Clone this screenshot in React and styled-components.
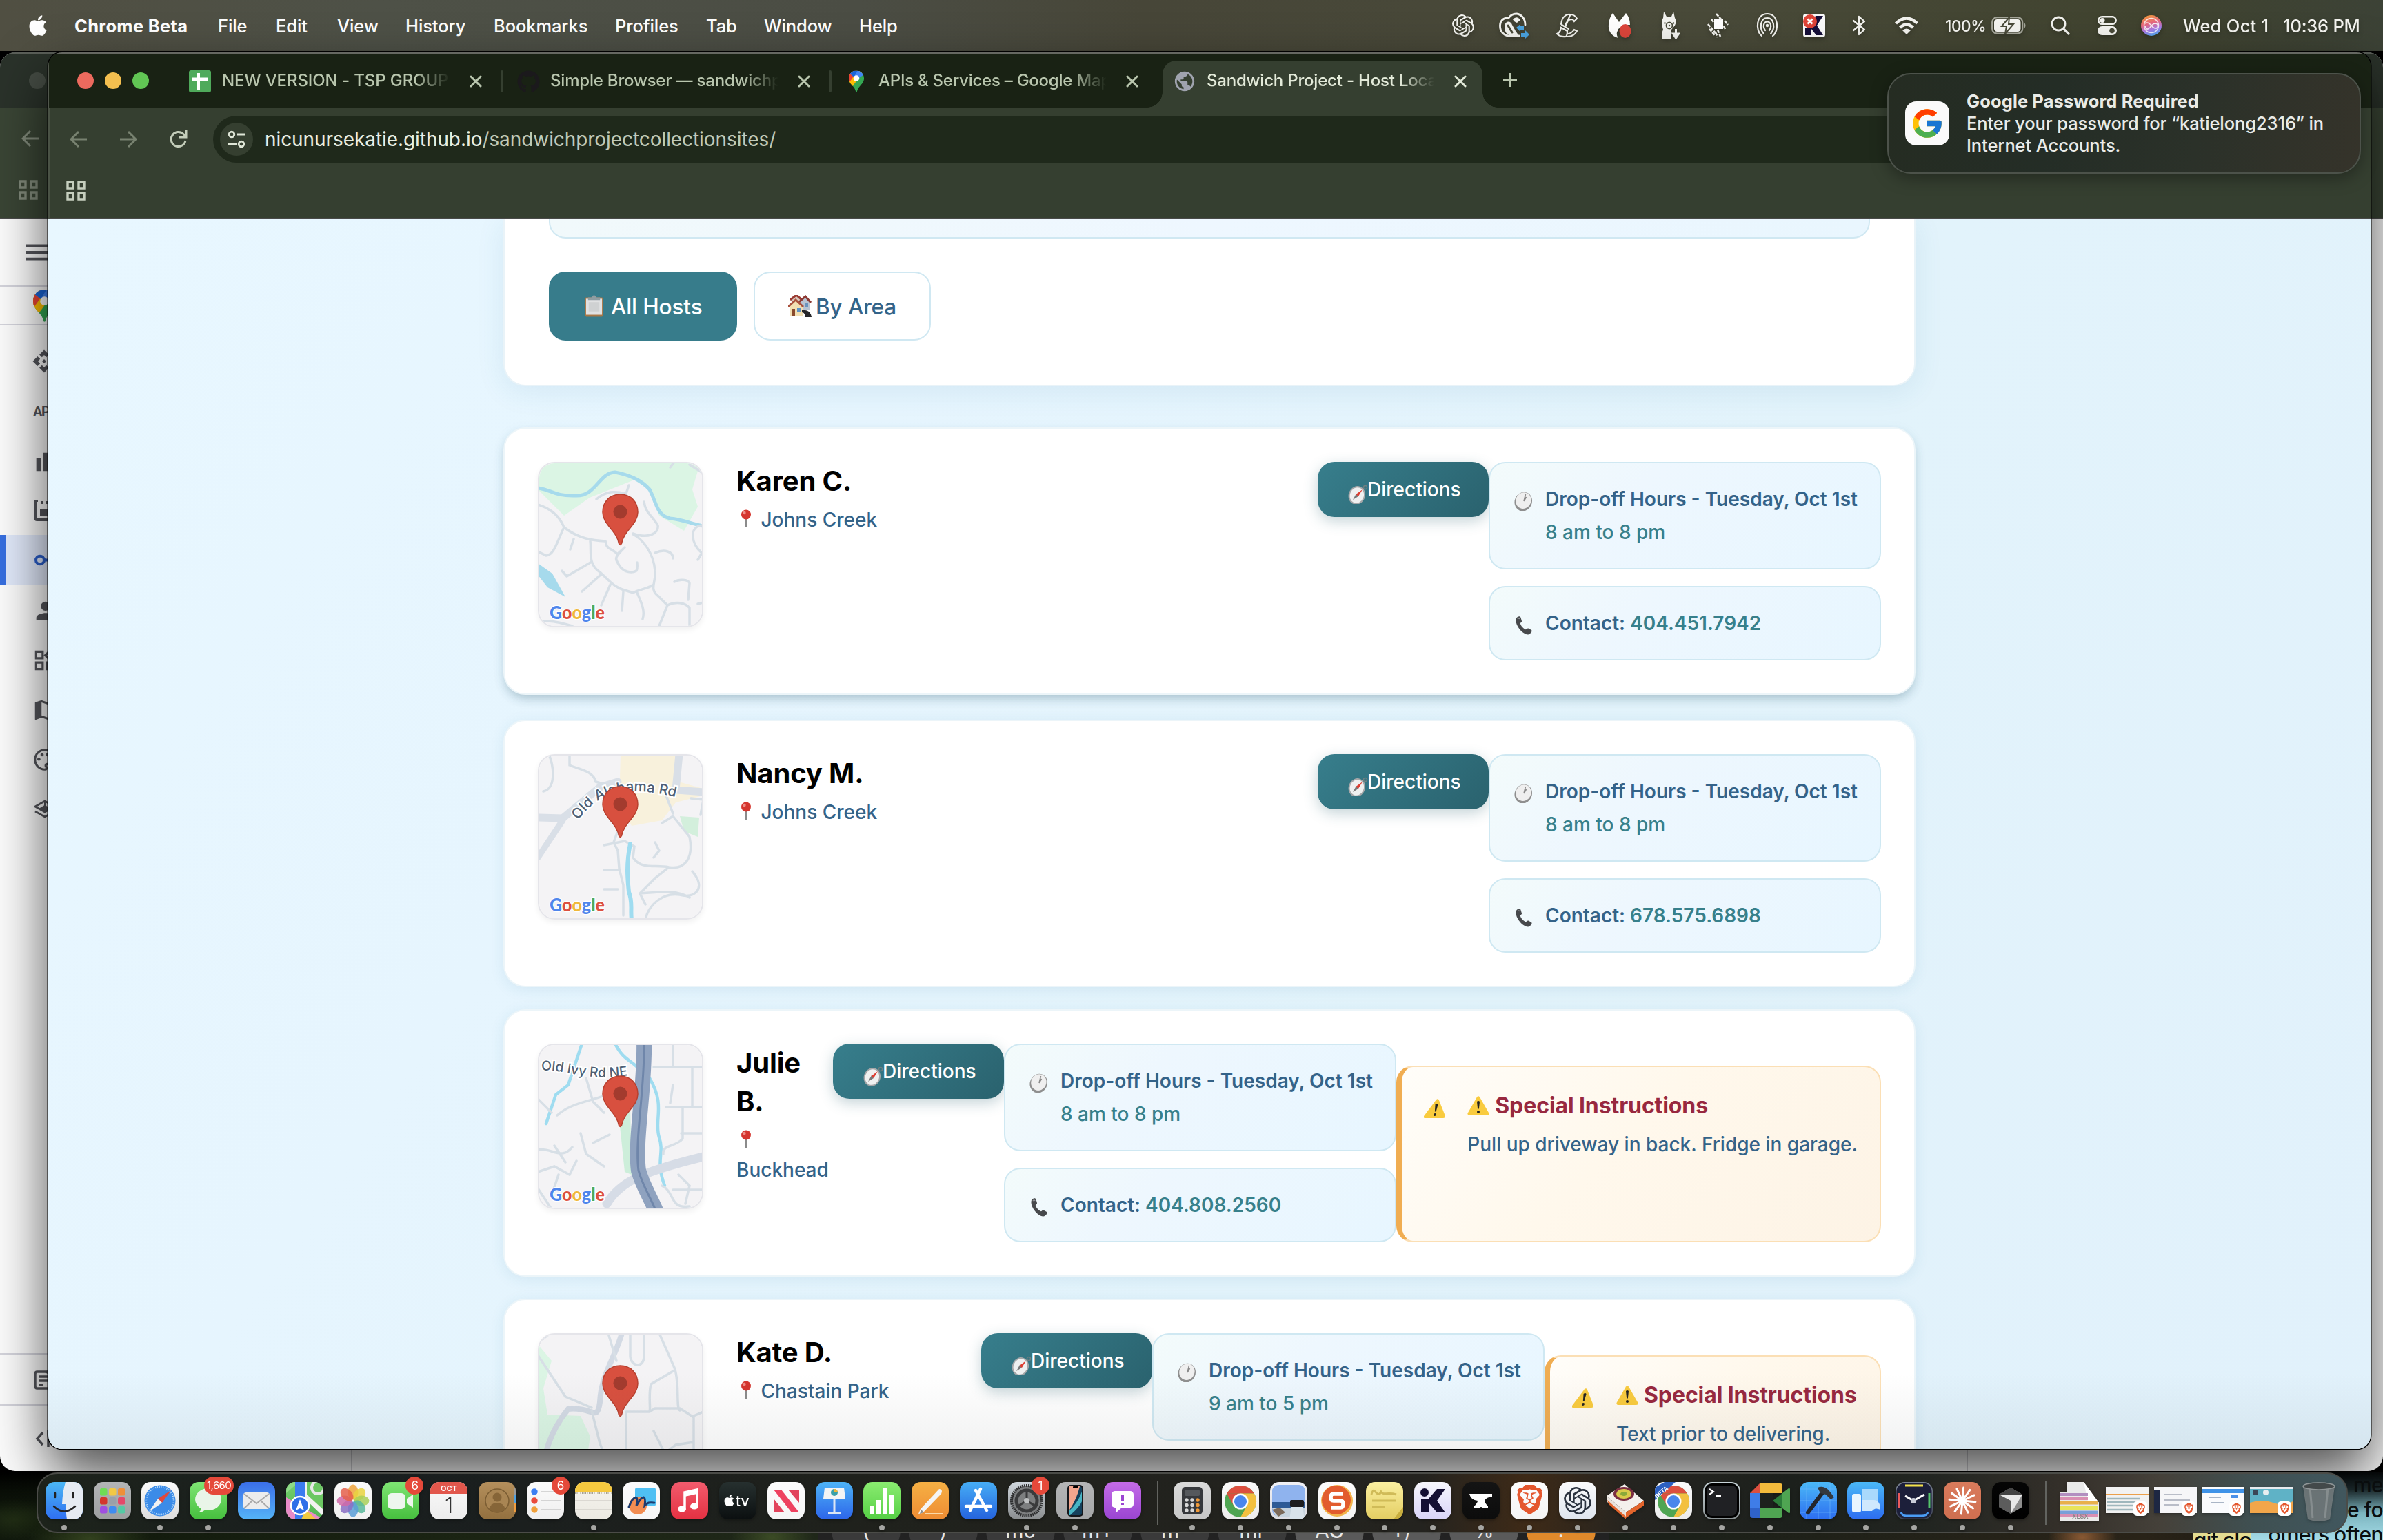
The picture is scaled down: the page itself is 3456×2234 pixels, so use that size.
import React from "react";
import styled, { createGlobalStyle, css } from "styled-components";
import { FaApple, FaGithub } from "react-icons/fa";
import { FcGoogle } from "react-icons/fc";
import {
  MdApi, MdBarChart, MdPerson, MdOutlineWidgets, MdMap,
  MdOutlinePalette, MdPublic, MdMenu,
} from "react-icons/md";
import { SiOpenai, SiBrave } from "react-icons/si";

const Global = createGlobalStyle`
  * { box-sizing: border-box; }
  html, body { margin: 0; padding: 0; background: #000; overflow: hidden; }
  body { font-family: Inter, "Liberation Sans", sans-serif; }
  svg { display: block; flex: none; }
`;

/* ---------- desktop ---------- */
const Desktop = styled.div`
  position: relative;
  width: 3456px;
  height: 2234px;
  overflow: hidden;
  background: #000;
`;

const Wallpaper = styled.div`
  position: absolute;
  left: 0;
  top: 2134px;
  width: 3456px;
  height: 100px;
  background:
    linear-gradient(#000 0%, rgba(0, 0, 0, 0.4) 30%, rgba(0, 0, 0, 0) 60%),
    radial-gradient(60px 30px at 1120px 96px, #3c4c26, transparent),
    radial-gradient(90px 34px at 130px 98px, #33421f, transparent),
    radial-gradient(60px 30px at 20px 70px, #202c14, transparent),
    radial-gradient(50px 30px at 3020px 96px, #8a5a34, transparent),
    linear-gradient(90deg, #10180c, #1c2514 20%, #20281a 34%, #1c211a 70%, #2a2419 90%, #12100c);
`;

const CalcStrip = styled.div`
  position: absolute;
  left: 1186px;
  top: 2200px;
  width: 1148px;
  height: 34px;
  display: flex;
  gap: 12px;
  padding: 0 0 0 20px;
  background: #232323;
  overflow: hidden;
`;
const CalcKey = styled.div`
  width: 100px;
  flex: none;
  height: 60px;
  border-radius: 0 0 40px 40px;
  text-align: center;
  font-size: 30px;
  line-height: 40px;
  color: #e8e8e8;
  background: ${(p) => p.$bg};
`;

const Sticky = styled.div`
  position: absolute;
  left: ${(p) => p.$x}px;
  top: ${(p) => p.$y}px;
  width: ${(p) => p.$w}px;
  height: ${(p) => p.$h}px;
  overflow: hidden;
  background: ${(p) => p.$bg};
  color: #0b0f10;
  font-size: 30px;
  font-weight: 500;
  letter-spacing: -0.6px;
  line-height: 36px;
  text-align: right;
  white-space: pre;
`;

/* ---------- menu bar ---------- */
const MenuBar = styled.header`
  height: 74px;
  display: flex;
  align-items: center;
  color: #fff;
  font-size: 25.5px;
  background: linear-gradient(90deg, #504f42 0%, #4e5147 16%, #4b4d44 36%, #474638 48%, #494a39 72%, #40432f 90%, #3c4236 100%);
`;
const AppleCell = styled.div`
  width: 108px;
  padding-left: 38px;
`;
const MenuItem = styled.div`
  width: ${(p) => p.$w}px;
  white-space: nowrap;
  font-weight: ${(p) => (p.$bold ? 700 : 500)};
  letter-spacing: ${(p) => (p.$bold ? "0.3px" : "-0.1px")};
`;
const Status = styled.div`
  margin-left: auto;
  display: flex;
  align-items: center;
  filter: drop-shadow(0 3px 3px rgba(0, 0, 0, 0.25));
`;
const StatusCell = styled.div`
  width: ${(p) => p.$w}px;
  padding-left: ${(p) => p.$pl || 0}px;
  display: flex;
  justify-content: ${(p) => (p.$start ? "flex-start" : "center")};
  white-space: nowrap;
  font-weight: 500;
  font-size: ${(p) => p.$fs || 25.5}px;
  letter-spacing: ${(p) => p.$ls || 0}px;
  color: #f4f4f0;
`;

/* ---------- windows ---------- */
const BackWindow = styled.div`
  position: absolute;
  left: 0;
  top: 76px;
  width: 3456px;
  height: 2058px;
  border-radius: 22px;
  overflow: hidden;
  background: #fcfcfc;
  display: flex;
  flex-direction: column;
`;
const BackTabs = styled.div`
  height: 80px;
  flex: none;
  background: #2a322a;
  border-top: 2px solid #5c605a;
  padding: 27px 0 0 42px;
`;
const GreyDot = styled.div`
  width: 24px;
  height: 24px;
  border-radius: 50%;
  background: #454c44;
`;
const BackTools = styled.div`
  height: 162px;
  flex: none;
  background: #3a4535;
  border-bottom: 2px solid #4c4c4c;
  padding: 32px 0 0 31px;
  display: flex;
  flex-direction: column;
  gap: 47px;
  color: #80897a;
  svg + svg { margin-left: -5px; }
`;
const BackBody = styled.div`
  flex: 1;
  display: flex;
`;
const Rail = styled.nav`
  width: 511px;
  flex: none;
  border-right: 2px solid #d0d0d4;
  display: flex;
  flex-direction: column;
  color: #55565c;
`;
const RailRow = styled.div`
  height: ${(p) => p.$h}px;
  flex: none;
  display: flex;
  align-items: center;
  padding-left: ${(p) => p.$pl || 46}px;
  border-bottom: ${(p) => (p.$line ? "2px solid #d4d4dc" : "0")};
  margin-top: ${(p) => p.$mt || 0}px;
  ${(p) => p.$active && css`
    background: #e2eafb;
    color: #2b5fcb;
    box-shadow: inset 8px 0 0 #376fe0;
  `}
`;
const ApiText = styled.span`
  font: 700 20px Roboto, sans-serif;
  letter-spacing: -1.5px;
  padding-left: 2px;
`;
const BackPane = styled.div`
  width: 2343px;
  border-right: 2px solid #d0d0d4;
`;

const FrontWindow = styled.div`
  position: absolute;
  left: 70px;
  top: 76px;
  width: 3368px;
  height: 2026px;
  border-radius: 20px;
  box-shadow: 0 0 0 1.5px #000, 0 36px 80px rgba(0, 0, 0, 0.7);
`;
const WindowClip = styled.div`
  height: 100%;
  border-radius: 20px;
  overflow: hidden;
  display: flex;
  flex-direction: column;
`;
const TabStrip = styled.div`
  height: 80px;
  flex: none;
  display: flex;
  background: #192214;
  border-top: 2px solid #666862;
  border-left: 1px solid #50564c;
  padding-top: 10px;
`;
const Lights = styled.div`
  display: flex;
  gap: 16px;
  width: 188px;
  padding: 17px 0 0 41px;
`;
const Light = styled.i`
  width: 24px;
  height: 24px;
  border-radius: 50%;
  background: ${(p) => p.$c};
`;
const TabItem = styled.div`
  width: 476px;
  height: 68px;
  padding: 0 0 8px 15px;
  display: flex;
  flex: none;
  align-items: center;
  position: relative;
  color: ${(p) => (p.$active ? "#e3ead9" : "#b9c6ae")};
  ${(p) => p.$active && css`
    width: 464px;
    margin-left: -1px;
    padding-left: 16px;
    background: #353f30;
    border-radius: 20px 20px 0 0;
    &::before, &::after {
      content: "";
      position: absolute;
      bottom: 0;
      width: 22px;
      height: 22px;
    }
    &::before { left: -22px; background: radial-gradient(circle at 0 0, transparent 21.5px, #353f30 22px); }
    &::after { right: -22px; background: radial-gradient(circle at 100% 0, transparent 21.5px, #353f30 22px); }
  `}
`;
const TabIcon = styled.div`
  width: 32px;
  flex: none;
  display: flex;
  justify-content: center;
`;
const TabLabel = styled.div`
  width: 334px;
  flex: none;
  margin-left: 16px;
  margin-top: -2px;
  overflow: hidden;
  white-space: nowrap;
  font-size: 24px;
  font-weight: 500;
  letter-spacing: ${(p) => p.$ls || 0}px;
  line-height: 34px;
  mask-image: linear-gradient(90deg, #000 84%, transparent 99%);
`;
const TabSep = styled.div`
  width: 4px;
  height: 32px;
  border-radius: 2px;
  background: #353f30;
  margin-left: 27px;
`;
const CloseX = styled.div`
  margin-left: 25px;
`;
const NewTab = styled.div`
  padding: 18px 0 0 30px;
`;

const Toolbar = styled.div`
  height: 90px;
  flex: none;
  display: flex;
  align-items: center;
  background: #353f30;
  border-left: 2px solid #4a5245;
  padding: 2px 60px 0 29px;
  color: #788270;
`;
const NavCell = styled.div`
  width: 72px;
  display: flex;
`;
const UrlPill = styled.div`
  flex: 1;
  height: 68px;
  border-radius: 34px;
  background: #1f291b;
  display: flex;
  align-items: center;
  padding-left: 10px;
  margin-left: -8px;
`;
const SiteChip = styled.div`
  width: 48px;
  height: 48px;
  border-radius: 50%;
  background: #353f30;
  display: flex;
  align-items: center;
  justify-content: center;
`;
const Url = styled.div`
  margin-left: 17px;
  font-size: 28px;
  letter-spacing: -0.07px;
  color: #c0c9b8;
  span { color: #e8eee2; }
`;
const Bookmarks = styled.div`
  height: 72px;
  flex: none;
  background: #353f30;
  border-bottom: 2px solid #494a48;
  border-left: 2px solid #4a5245;
  padding: 16px 0 0 23px;
  color: #c6cfbe;
`;

/* ---------- page ---------- */
const Page = styled.main`
  flex: 1;
  min-height: 0;
  overflow: hidden;
  position: relative;
  display: flex;
  flex-direction: column;
  align-items: center;
  background: linear-gradient(125deg, #e8f7ff 0%, #e6f5fe 30%, #e2f3fb 60%, #e1f1fb 100%);
  &::after {
    content: "";
    position: absolute;
    left: 0; right: 0; bottom: 0;
    height: 110px;
    background: linear-gradient(rgba(60, 70, 70, 0), rgba(60, 70, 70, 0.07));
  }
`;
const HeaderCard = styled.section`
  width: 2048px;
  height: 242px;
  flex: none;
  padding: 0 64px;
  background: #fff;
  border: 2px solid #e9f3f8;
  border-top: 0;
  border-radius: 0 0 32px 32px;
  box-shadow: 0 8px 40px rgba(40, 120, 160, 0.1);
`;
const SearchBottom = styled.div`
  height: 28px;
  border: 2px solid #d0e8f2;
  border-top: 0;
  border-radius: 0 0 24px 24px;
  background: linear-gradient(90deg, #f1f9fb, #eef7ff 50%, #e9f6fe);
`;
const Filters = styled.div`
  display: flex;
  gap: 24px;
  margin-top: 48px;
`;
const FilterButton = styled.button`
  width: ${(p) => p.$w}px;
  height: 100px;
  padding: 0 0 0 ${(p) => p.$pl}px;
  display: flex;
  align-items: center;
  gap: ${(p) => p.$gap}px;
  font: 500 31.5px Inter, sans-serif;
  letter-spacing: -0.1px;
  border-radius: 24px;
  border: 2px solid ${(p) => (p.$on ? "#377c8b" : "#d0e8f2")};
  background: ${(p) => (p.$on ? "#377c8b" : "#fff")};
  color: ${(p) => (p.$on ? "#fff" : "#336388")};
  white-space: nowrap;
`;
const List = styled.section`
  display: flex;
  flex-direction: column;
  gap: 32px;
  padding-top: 64px;
  width: 2048px;
`;
const Card = styled.article`
  height: 388px;
  flex: none;
  display: flex;
  align-items: stretch;
  padding: 48px;
  background: #fff;
  border: 2px solid #ecf5f9;
  border-radius: 32px;
  box-shadow: ${(p) => (p.$hover
    ? "0 8px 16px -4px rgba(40,80,95,.3), 0 4px 20px rgba(40,120,160,.06)"
    : "0 4px 20px rgba(40,120,160,.1)")};
  transform: ${(p) => (p.$hover ? "translateY(-4px)" : "none")};
`;
const MapThumb = styled.div`
  width: 240px;
  height: 240px;
  flex: none;
  border: 2px solid #e5e5ea;
  border-radius: 24px;
  overflow: hidden;
  box-shadow: 0 4px 8px rgba(0, 0, 0, 0.06);
  margin-right: 48px;
`;
const Who = styled.div`
  flex: 1 1 0;
  min-width: 0;
  padding-right: 6px;
`;
const Name = styled.h3`
  margin: 0 0 7px;
  font-size: 40px;
  line-height: 56px;
  font-weight: 700;
  letter-spacing: -0.15px;
  color: #000;
`;
const Area = styled.div`
  font-size: 28px;
  line-height: 42.5px;
  font-weight: 500;
  color: #346389;
  svg { display: inline-block; vertical-align: -1px; margin: 0 5px 0 5px; }
`;
const Directions = styled.button`
  width: 248px;
  height: 80px;
  flex: none;
  border: 0;
  border-radius: 24px;
  display: flex;
  align-items: center;
  padding: 0 0 0 43px;
  font: 500 28px Inter, sans-serif;
  color: #fff;
  background: linear-gradient(135deg, #377e8c, #2a626e);
  box-shadow: 0 6px 20px rgba(42, 98, 110, 0.28);
  svg { margin: 14px -1px 0 0; }
`;
const Facts = styled.div`
  width: 569px;
  flex: none;
  display: flex;
  flex-direction: column;
  gap: 24px;
`;
const Fact = styled.div`
  display: flex;
  padding: 28px 32px 28px 34px;
  border: 2px solid #cfe8f2;
  border-radius: 24px;
  font-size: 28px;
  line-height: 48px;
  font-weight: 600;
  color: #346389;
  white-space: nowrap;
  background: linear-gradient(135deg, #f3fbfb 0%, #eef7fe 35%, #e7f6ff 100%);
  svg { margin: 13px 16px 0 0; }
`;
const Value = styled.span`
  color: #37808b;
  font-weight: ${(p) => (p.$strong ? 600 : 500)};
`;
const Special = styled.aside`
  width: ${(p) => p.$w}px;
  flex: none;
  margin-top: 32px;
  display: flex;
  padding: 32px 32px 0 32px;
  border: 2px solid #fbdfb5;
  border-left: 8px solid #f0ad52;
  border-radius: 24px;
  background: linear-gradient(135deg, #fffdf9 0%, #fff8ec 45%, #fdf3e5 100%);
  white-space: nowrap;
`;
const SpecialIcon = styled.div`
  width: 64px;
  padding-top: 14px;
`;
const SpecialTitle = styled.div`
  display: flex;
  align-items: center;
  gap: 8px;
  font-size: 32px;
  line-height: 48px;
  font-weight: 700;
  letter-spacing: -0.1px;
  color: #98283f;
`;
const SpecialText = styled.div`
  margin-top: 10px;
  font-size: 28px;
  line-height: 44px;
  font-weight: 500;
  color: #346389;
`;

/* ---------- notification ---------- */
const Notice = styled.div`
  position: absolute;
  left: 2737px;
  top: 106px;
  width: 687px;
  height: 146px;
  border: 2px solid #4c524a;
  border-radius: 34px;
  display: flex;
  align-items: center;
  padding-left: 24px;
  background: linear-gradient(100deg, #252c22 0%, #242d26 35%, #2b3129 65%, #35332a 100%);
  box-shadow: 0 6px 24px rgba(0, 0, 0, 0.35);
`;
const NoticeIcon = styled.div`
  width: 64px;
  height: 64px;
  border-radius: 16px;
  background: #fafafa;
  display: flex;
  align-items: center;
  justify-content: center;
`;
const NoticeText = styled.div`
  margin-left: 25px;
  font-size: 25.5px;
  font-weight: 500;
  line-height: 32.3px;
  color: #e9ebe8;
  white-space: nowrap;
  letter-spacing: -0.1px;
  b { display: block; font-weight: 700; letter-spacing: 0.1px; }
`;

/* ---------- dock ---------- */
const Dock = styled.div`
  position: absolute;
  left: 53px;
  top: 2136px;
  width: 3352px;
  height: 88px;
  border: 2px solid #4b4c48;
  border-radius: 30px;
  display: flex;
  align-items: flex-start;
  padding: 12px 0 0 3px;
  background: linear-gradient(90deg, #1d231b 0%, #191e1f 14%, #1f211c 35%, #24231f 60%, #3e2a17 64.5%, #252420 69%, #1c201c 76%, #222521 82%, #35302a 88%, #45413a 92%, #3f5052 96%, #41575e 100%);
`;
const DockItem = styled.div`
  width: ${(p) => p.$w || 69.8}px;
  flex: none;
  display: flex;
  flex-direction: column;
  align-items: center;
  position: relative;
  filter: drop-shadow(0 2px 2px rgba(0, 0, 0, 0.3));
`;
const Running = styled.i`
  width: 8px;
  height: 8px;
  border-radius: 50%;
  margin-top: 8px;
  background: #a5a5a2;
`;
const Badge = styled.span`
  position: absolute;
  top: -8px;
  right: ${(p) => p.$r}px;
  min-width: 26px;
  height: 26px;
  padding: 0 4px;
  border-radius: 13px;
  background: #e5493a;
  color: #fff;
  font-size: ${(p) => p.$fs || 17}px;
  line-height: 26px;
  text-align: center;
  letter-spacing: -0.6px;
`;
const DockSep = styled.div`
  width: 2px;
  height: 64px;
  margin: -2px ${(p) => p.$mr}px 0 ${(p) => p.$ml}px;
  background: #62635f;
`;

/* ---------- glyphs ---------- */
const XMark = () => (
  <svg width="18" height="18" viewBox="0 0 18 18"><path d="M2 2L16 16M16 2L2 16" stroke="currentColor" strokeWidth="3" strokeLinecap="round" /></svg>
);
const Arrow = ({ flip }) => (
  <svg width="26" height="26" viewBox="0 0 26 26">
    <path d={flip ? "M1 13H23M13 2L24 13L13 24" : "M25 13H3M13 2L2 13L13 24"} stroke="currentColor" strokeWidth="3" fill="none" />
  </svg>
);
const Grid4 = () => (
  <svg width="30" height="30" viewBox="0 0 30 30"><path d="M3 2h8v9H3zM19 2h8v9h-8zM3 18h8v9H3zM19 18h8v9h-8z" fill="none" stroke="currentColor" strokeWidth="3.400" /></svg>
);
const MapsLogo = ({ w, h }) => (
  <svg width={w} height={h} viewBox="0 0 24 34">
    <clipPath id="mp"><path d="M12 0C5 0 0 5.400 0 12c0 5 2.400 8 5.500 11.500C9 27.500 10.500 30 11 33.200c.3 1 1.700 1 2 0 .5-3.200 2-5.700 5.500-9.700C21.600 20 24 17 24 12 24 5.400 19 0 12 0z" /></clipPath>
    <g clipPath="url(#mp)">
      <rect width="24" height="34" fill="#34a853" />
      <path d="M0 0H24L6 25L0 30z" fill="#fbbc04" />
      <path d="M0 18V0H14L2 17z" fill="#ea4335" />
      <path d="M2 0H24V6L13 14L2 5z" fill="#4285f4" />
      <path d="M14 0H2V5L8 10z" fill="#1a66d8" />
    </g>
    <circle cx="12" cy="12" r="4.600" fill="#fff" />
  </svg>
);
const SheetIcon = () => (
  <svg width="32" height="32" viewBox="0 0 32 32"><rect width="32" height="32" rx="3" fill="#4faa5b" /><path d="M13.500 4v24M4 13h24" stroke="#fff" strokeWidth="5" /></svg>
);
const KeyIcon = () => (
  <svg width="36" height="20" viewBox="0 0 36 20"><ellipse cx="9" cy="9.500" rx="6" ry="5.800" fill="none" stroke="currentColor" strokeWidth="4" /><path d="M15 9.500H36M29 10V17" stroke="currentColor" strokeWidth="4" /></svg>
);
const QuotaIcon = () => (
  <svg width="32" height="30" viewBox="0 0 32 30"><path d="M6 0H2V25Q2 28 5 28H32" stroke="currentColor" strokeWidth="4" fill="none" /><path d="M10 3H32" stroke="currentColor" strokeWidth="4" strokeDasharray="4 3" /><rect x="9" y="12" width="23" height="10" fill="currentColor" /></svg>
);
const DatasetIcon = () => (
  <svg width="32" height="28" viewBox="0 0 32 28"><path d="M2 10L16 2L30 10L16 18zM2 17L16 25L30 17" stroke="currentColor" strokeWidth="2.800" fill="none" /><path d="M16 4V10M9 13L16 9L23 13L16 18z" fill="currentColor" stroke="currentColor" strokeWidth="2" /></svg>
);
const NotesIcon = () => (
  <svg width="34" height="30" viewBox="0 0 34 30"><path d="M20 4H5Q2 4 2 7V25Q2 28 5 28H30" stroke="currentColor" strokeWidth="3.500" fill="none" /><path d="M7 11H24M7 17H24M7 23H14" stroke="currentColor" strokeWidth="3.500" /><path d="M16 5L22 0V8z" fill="currentColor" /></svg>
);

const PinEmoji = () => (
  <svg width="18" height="26" viewBox="0 0 18 26">
    <path d="M9 13V26" stroke="#8b8b8b" strokeWidth="2.200" />
    <circle cx="9" cy="7.500" r="7" fill="#d5362f" /><circle cx="6.500" cy="5" r="2.200" fill="#ef8d86" />
  </svg>
);
const CompassEmoji = () => (
  <svg width="30" height="28" viewBox="0 0 30 28">
    <g transform="rotate(22 14 15)"><ellipse cx="14" cy="15.500" rx="12" ry="13.500" fill="#a4a6a8" /><ellipse cx="14" cy="15.500" rx="10" ry="11.500" fill="#eff0f0" /></g>
    <path d="M8 22L13 13L16 17z" fill="#777" /><path d="M22 7L12.500 14L16 17z" fill="#dd3c30" />
    <circle cx="26" cy="4" r="2.600" fill="none" stroke="#6f7f82" strokeWidth="1.500" />
  </svg>
);
const ClockEmoji = () => (
  <svg width="30" height="28" viewBox="0 0 30 28">
    <g transform="rotate(24 14 14)"><ellipse cx="14.500" cy="14.500" rx="12.500" ry="14" fill="#8f8f8f" /><ellipse cx="14" cy="13" rx="11" ry="12" fill="#efefef" /></g>
    <path d="M15 14L17.500 4M15 14L18.500 8" stroke="#8a8a8a" strokeWidth="1.600" />
  </svg>
);
const PhoneEmoji = () => (
  <svg width="30" height="28" viewBox="0 0 30 28">
    <path d="M4 4C6 .5 10 .5 10.500 3L12 8c.3 2-2.500 2-2 4 .8 3 4 6.500 7 8 1.800.8 2.500-2 4.500-1.500L26 21c2 1.500-1.500 6-5 6.500C12 27 1 12 4 4z" fill="#47494c" />
    <path d="M6 5c1-1.500 2.500-1.500 3 0" stroke="#909296" strokeWidth="1.500" fill="none" />
  </svg>
);
const WarnEmoji = ({ slant }) => (
  <svg width="32" height="28" viewBox="0 0 32 28">
    <g transform={slant ? "translate(4 0) skewX(-10)" : undefined}>
      <path d="M14 1.500Q16 -1 18 1.500L31.500 25Q32 28 29 28H3Q0 28 .5 25z" fill="#f9cb3e" />
      <path d="M14 8Q16 6 18 8L16.900 18.500H15.100z" fill="#222" /><circle cx="16" cy="23" r="2" fill="#222" />
    </g>
  </svg>
);
const ClipboardEmoji = () => (
  <svg width="27" height="32" viewBox="0 0 28 32">
    <rect y="3" width="28" height="29" rx="2.500" fill="#a87746" /><rect x="2" y="5" width="24" height="24" fill="#e0e1e2" />
    <rect x="6" y="10" width="16" height="14" fill="#cfd1d2" />
    <path d="M5 3h5q1-3 4-3t4 3h5v4H5z" fill="#8f9da2" />
  </svg>
);
const HousesEmoji = () => (
  <svg width="34" height="32" viewBox="0 0 34 32">
    <path d="M5 6L12 0l7 6v5H5z" fill="#d9c9bd" /><path d="M3 7L12 0l8 7" stroke="#9a3b32" strokeWidth="3" fill="none" />
    <path d="M18 9l7-7 7 7v12H18z" fill="#b8c4d2" /><path d="M16 10l9-8 8 9" stroke="#8d3932" strokeWidth="3" fill="none" />
    <path d="M2 16l9-9 10 9v15H2z" fill="#f2dfb2" /><path d="M0 17l11-10 11 10" stroke="#a9503c" strokeWidth="3" fill="none" />
    <rect x="5" y="20" width="5" height="11" fill="#8a4a2c" /><rect x="13" y="19" width="5" height="6" fill="#5f93c7" />
    <rect x="24" y="11" width="5" height="6" fill="#6b94bd" />
    <path d="M20 22q12-2 14 10h-9q0-6-5-7z" fill="#26262a" />
  </svg>
);

/* ---------- map thumbnails ---------- */
const Roads = ({ d, w = 3.5, c = "#d7dfe6" }) => <path d={d} fill="none" stroke={c} strokeWidth={w} strokeLinecap="round" />;
const MapSvg = ({ children }) => (
  <svg width="236" height="236" viewBox="2 2 236 236">
    <rect width="240" height="240" fill="#f4f3f5" />
    {children}
    <path d="M119.500 47c-15 0-25.500 11-25.500 26 0 18 20 26 23.500 45.500q2 4 4 0C125 99 145 91 145 73c0-15-10.500-26-25.500-26z" fill="#d8503f" stroke="#b8402f" strokeWidth="1.500" />
    <circle cx="119.500" cy="72.500" r="10" fill="#a33b2e" />
    <text x="17" y="228" fontFamily="Lato, sans-serif" fontSize="26.500" fontWeight="900" stroke="#fff" strokeWidth="2.500" paintOrder="stroke" textLength="80" lengthAdjust="spacingAndGlyphs">
      <tspan fill="#4f86ec">G</tspan><tspan fill="#dc5040">o</tspan><tspan fill="#f0b93a">o</tspan><tspan fill="#4f86ec">g</tspan><tspan fill="#4faa5b">l</tspan><tspan fill="#dc5040">e</tspan>
    </text>
  </svg>
);
const maps = {
  karen: (
    <MapSvg>
      <path d="M0 0H236L224 40L232 65L212 100L176 78L160 40L140 26L75 52L38 78L0 40z" fill="#dbf5e4" />
      <Roads d="M0 38C20 40 22 50 55 49C85 50 88 16 112 15C130 18 150 26 162 40C172 58 172 78 192 82C212 84 222 90 240 93" w={5} c="#a6daec" />
      <path d="M0 147L21 162L40 196L14 182L0 164z" fill="#a6daec" />
      <Roads d="M0 62C20 68 32 80 38 95C60 112 80 114 98 115L100 122C104 128 112 128 115 134L126 124M85 54C100 42 110 42 128 46L132 34M38 95C30 110 24 136 12 136L0 130M52 112L47 127M76 115C78 130 72 148 90 160L106 175C118 186 128 186 138 190C150 184 160 184 168 178M138 105C152 112 168 132 170 158C172 176 160 184 176 196L188 208C200 202 214 204 220 212V238M188 208L176 238M138 104C160 112 176 104 174 92C166 78 156 74 154 58M126 124C110 140 112 140 118 150C124 160 136 162 143 158C145 154 144 150 144 146M170 132C184 126 196 130 196 140M78 145L42 166M42 166L35 158M92 163L64 188M106 176L92 208M124 188L122 216M144 190C150 204 156 216 152 228M198 174C204 170 218 170 220 176L218 200M240 92C218 92 222 120 238 132L232 142M192 8L198 0M220 4L236 14M0 232C20 228 40 236 50 238M232 206L240 204" />
    </MapSvg>
  ),
  nancy: (
    <MapSvg>
      <path d="M120 0H204V40L240 50V60L200 70L180 96L136 104L118 70z" fill="#f8f1dc" />
      <path d="M206 90L234 92L232 120L212 112z" fill="#d3efdc" />
      <Roads d="M205 0L200 52L240 55M0 92L36 93L90 48L116 40" w={11} c="#d9dfe7" />
      <Roads d="M0 150L36 96" w={9} c="#d9dfe7" />
      <Roads d="M16 0C24 20 26 50 8 54M46 0V16C60 22 80 24 84 40L118 50M120 100L110 128L116 140L118 166L124 190V234M96 132L126 126L140 134L138 150C150 168 170 160 190 164C214 168 226 150 220 120L196 90L180 100M190 164L170 180L148 202L156 218M170 128L176 140L168 150M224 170C246 196 226 210 206 204C180 200 160 220 156 240M96 168H116M96 196H116M196 86L186 60M222 64L240 66L236 88M148 202C180 200 200 196 220 208" />
      <Roads d="M134 130C128 160 130 180 132 200C138 215 134 226 136 240" w={6} c="#9fdcf0" />
      <path id="al" d="M59 96C86 54 132 44 206 64" fill="none" />
      <text fontFamily="Inter, sans-serif" fontSize="20.500" fontWeight="500" fill="#4e5f75" stroke="#fff" strokeWidth="4" paintOrder="stroke"><textPath href="#al">Old Alabama Rd</textPath></text>
    </MapSvg>
  ),
  julie: (
    <MapSvg>
      <path d="M118 110L134 90L136 190L126 186z" fill="#cdeeda" />
      <Roads d="M64 0L44 60L26 74L12 116M112 0C124 24 136 24 146 36M162 50C186 90 168 110 176 136C184 160 170 170 184 206" w={4.500} c="#9fdcf0" />
      <Roads d="M168 34H240M196 0V34M224 34V92M186 92H240M196 60L192 86M210 92V138C200 150 180 146 182 160M240 130H208M0 80L20 100M28 104C50 84 80 84 110 70M70 50L80 84L96 100M0 154C20 150 34 170 50 150M24 148L40 172M62 130L70 160L96 178M80 144L104 132M0 186L24 178L46 190L56 170M30 190L20 220M180 206C200 216 190 240 220 236M204 190L220 206L214 232M240 212H196M0 210L20 240" />
      <Roads d="M100 232C120 200 150 186 240 164" w={13} c="#d6dce6" />
      <Roads d="M154 -4C156 60 140 140 146 184C152 206 162 220 172 244" w={22} c="#8fa2bf" />
      <Roads d="M154 -4C156 60 140 140 146 184C152 206 162 220 172 244" w={3} c="#6f86aa" />
      <path id="iv" d="M5 39C40 36 80 60 150 42" fill="none" />
      <text fontFamily="Inter, sans-serif" fontSize="19.500" fontWeight="500" fill="#4e5f75" stroke="#fff" strokeWidth="4" paintOrder="stroke"><textPath href="#iv">Old Ivy Rd NE</textPath></text>
    </MapSvg>
  ),
  kate: (
    <MapSvg>
      <path d="M0 16L20 40L8 80L14 118L62 120L76 150L62 240H0z" fill="#dbf5e4" />
      <Roads d="M122 0C110 40 92 60 90 100C86 130 80 106 44 110C20 140 6 170 4 240" w={8} c="#d3dae4" />
      <Roads d="M0 14L18 0M0 32L40 92L78 108M102 0L114 40M134 0V34C136 50 154 50 154 34V0M176 0L198 50C206 70 200 110 206 112M198 54L164 74C160 90 164 110 162 114M128 114H162L170 109H206L226 122V240M226 120L240 114M128 114V180L118 200M78 112L90 160L102 190L112 240M168 142L184 174L200 162L226 158M184 174L170 210" />
    </MapSvg>
  ),
};

const hosts = [
  { id: "karen", name: "Karen C.", area: "Johns Creek", hours: "8 am to 8 pm", phone: "404.451.7942", hover: true },
  { id: "nancy", name: "Nancy M.", area: "Johns Creek", hours: "8 am to 8 pm", phone: "678.575.6898" },
  { id: "julie", name: "Julie B.", area: "Buckhead", hours: "8 am to 8 pm", phone: "404.808.2560", note: "Pull up driveway in back. Fridge in garage.", noteWidth: 703 },
  { id: "kate", name: "Kate D.", area: "Chastain Park", hours: "9 am to 5 pm", note: "Text prior to delivering.", noteWidth: 488 },
];

const HostCard = ({ host }) => (
  <Card $hover={host.hover}>
    <MapThumb>{maps[host.id]}</MapThumb>
    <Who>
      <Name>{host.name}</Name>
      <Area><PinEmoji /> {host.area}</Area>
    </Who>
    <Directions><CompassEmoji />Directions</Directions>
    <Facts>
      <Fact><ClockEmoji /><div>Drop-off Hours - Tuesday, Oct 1st<br /><Value>{host.hours}</Value></div></Fact>
      {host.phone && <Fact><PhoneEmoji /><div>Contact: <Value $strong>{host.phone}</Value></div></Fact>}
    </Facts>
    {host.note && (
      <Special $w={host.noteWidth}>
        <SpecialIcon><WarnEmoji slant /></SpecialIcon>
        <div>
          <SpecialTitle><WarnEmoji />Special Instructions</SpecialTitle>
          <SpecialText>{host.note}</SpecialText>
        </div>
      </Special>
    )}
  </Card>
);

/* ---------- dock artwork ---------- */
const Tile = ({ id, a, b, children }) => (
  <svg width="54" height="54" viewBox="0 0 54 54" overflow="visible">
    <defs>
      <linearGradient id={"g" + id} x1="0" y1="0" x2="0" y2="1"><stop offset="0" stopColor={a} /><stop offset="1" stopColor={b || a} /></linearGradient>
      <clipPath id={"c" + id}><rect width="54" height="54" rx="13" /></clipPath>
    </defs>
    <rect width="54" height="54" rx="13" fill={`url(#g${id})`} />
    <g clipPath={`url(#c${id})`}>{children}</g>
  </svg>
);
const ChromeMark = ({ r = 24 }) => (
  <g transform={`translate(27 28) scale(${r / 24})`}>
    <circle r="24" fill="#4fa552" />
    <path d="M-20.800 -12A24 24 0 0 1 20.800 -12H0z" fill="#dc4f3f" />
    <path d="M20.800 -12A24 24 0 0 1 0 24L10.400 6L0 -12z" fill="#f3c03f" />
    <path d="M-20.800 -12L-10.400 6L0 -12z" fill="#dc4f3f" />
    <circle r="12" fill="#fff" /><circle r="9.500" fill="#4a86ec" />
  </g>
);
const petals = ["#f0a53c", "#e9d33f", "#a9cf58", "#58b79a", "#5b9fd8", "#8a6fc4", "#cf6aa8", "#e5604b"];
const pads = ["#6fdc55", "#f2c844", "#ef8f38", "#d3372d", "#9aa0a8", "#e5486a", "#a04fe0", "#3f8cf0", "#55c9a4"];

const dockA = [
  { run: 1, art: <Tile id="finder" a="#4bb7f5" b="#2f6ff0"><path d="M27 0H54V54H31Q29 42 30 32H24Q25 12 29 0z" fill="#e6ebf2" /><path d="M14 16v6M40 16v6M12 35Q27 50 43 35" stroke="#222" strokeWidth="2.500" fill="none" strokeLinecap="round" /></Tile> },
  { art: <Tile id="lp" a="#b3b5b6" b="#9d9fa0">{pads.map((c, i) => <rect key={c} x={9 + (i % 3) * 13} y={9 + Math.floor(i / 3) * 13} width="10.500" height="10.500" rx="2.500" fill={c} />)}</Tile> },
  { run: 1, art: <Tile id="saf" a="#fbfbfb" b="#dcdcdc"><circle cx="27" cy="27" r="22.500" fill="#3b8be8" /><circle cx="27" cy="27" r="20" fill="none" stroke="#bfe0fa" strokeWidth="2.500" strokeDasharray="1 1.800" /><path d="M43 12L24 24L30 30z" fill="#e2483c" /><path d="M11 43L24 24L30 30z" fill="#f2f2f2" /></Tile> },
  { run: 1, badge: "1,660", fs: 15, r: -2, art: <Tile id="msg" a="#7fe574" b="#46bf3e"><ellipse cx="27" cy="25" rx="19" ry="16" fill="#e9f5e8" /><path d="M17 36q0 5-4 8q7 0 11-6z" fill="#e9f5e8" /></Tile> },
  { art: <Tile id="mail" a="#3b6fe9" b="#55b4f7"><rect x="8" y="15" width="38" height="24" rx="4" fill="#ececec" /><path d="M9 17L27 31L45 17M9 38L21 27M45 38L33 27" stroke="#a9a9a9" strokeWidth="2" fill="none" /></Tile> },
  { art: <Tile id="maps" a="#77d06d" b="#4fb454"><path d="M0 0H18L0 16z" fill="#8edb86" /><path d="M0 22L54 54H0z" fill="#e88bc8" /><path d="M13 0h14V54H13z" fill="#3a7bf0" /><path d="M33 0L54 20V50L27 24V0z" fill="#f2f2f2" /><path d="M30 0H46L54 10V40L30 18z" fill="#6cc763" /><circle cx="46" cy="8" r="9" fill="none" stroke="#e8e8e8" strokeWidth="4" /><path d="M28 40L44 54H22z" fill="#f1c93f" /><circle cx="20" cy="34" r="13" fill="#2f6fe8" stroke="#fff" strokeWidth="2.500" /><path d="M20 25L26 41L20 38L14 41z" fill="#fff" /></Tile> },
  { art: <Tile id="photos" a="#fafafa" b="#f0f0f0">{petals.map((c, i) => <ellipse key={c} cx="27" cy="14.500" rx="7.500" ry="11" fill={c} opacity=".85" transform={`rotate(${i * 45} 27 27)`} />)}</Tile> },
  { badge: "6", r: 2, art: <Tile id="ft" a="#7fe574" b="#46bf3e"><rect x="8" y="16" width="26" height="23" rx="6" fill="#eef6ee" /><path d="M36 24L45 18V37L36 31z" fill="#eef6ee" /></Tile> },
  { art: <Tile id="cal" a="#fafafa" b="#ececec"><rect width="54" height="17" fill="#e2574c" /><text x="27" y="13" textAnchor="middle" fontFamily="Inter" fontSize="11" fontWeight="600" fill="#fff">OCT</text><text x="27" y="45" textAnchor="middle" fontFamily="Inter" fontSize="31" fontWeight="300" fill="#333">1</text></Tile> },
  { art: <Tile id="con" a="#b48f5c" b="#93703f"><path d="M51 8h3v11h-3z" fill="#9a9a9a" /><path d="M51 19h3v12h-3z" fill="#4fa0e0" /><path d="M51 31h3v12h-3z" fill="#ef9d40" /><circle cx="27" cy="27" r="17" fill="#a98553" stroke="#7b5d33" strokeWidth="1.500" /><circle cx="27" cy="22" r="6.500" fill="#866538" /><path d="M15 39Q18 30 27 30T39 39Q33 44 27 44T15 39z" fill="#866538" /></Tile> },
  { badge: "6", r: 0, art: <Tile id="rem" a="#fbfbfb" b="#efefef"><g fill="none" strokeWidth="1.500"><circle cx="11" cy="14" r="4" stroke="#3d7ff2" fill="#3d7ff2" /><circle cx="11" cy="27" r="4" stroke="#e94b3c" fill="#e94b3c" /><circle cx="11" cy="40" r="4" stroke="#f0a03a" fill="#f0a03a" /><path d="M21 14h28M21 27h28M21 40h28" stroke="#c9c9c9" /></g></Tile> },
  { run: 1, art: <Tile id="notes" a="#f6f4ee" b="#ebe9e2"><rect width="54" height="15" fill="#f6c93f" /><path d="M0 16h54" stroke="#8d8570" strokeWidth="1.500" strokeDasharray="1 1.500" /><path d="M0 27h54M0 40h54" stroke="#d3d1ca" strokeWidth="1.300" /></Tile> },
  { art: <Tile id="free" a="#fcfcfc" b="#f6f6f6"><rect x="18" y="8" width="30" height="27" rx="3" fill="#4fc0f3" /><circle cx="22" cy="34" r="13" fill="#f28d52" /><path d="M9 36C16 18 24 18 20 34C30 16 34 20 32 34C38 28 40 30 46 30" stroke="#1c3c70" strokeWidth="3" fill="none" strokeLinecap="round" /></Tile> },
  { art: <Tile id="music" a="#f25b6d" b="#e33142"><path d="M20 38V15L38 11V34" stroke="#fff" strokeWidth="3.500" fill="none" /><path d="M20 15L38 11V17L20 21z" fill="#fff" /><ellipse cx="16" cy="39" rx="6" ry="4.500" fill="#fff" /><ellipse cx="34" cy="35" rx="6" ry="4.500" fill="#fff" /></Tile> },
  { art: <Tile id="tv" a="#26302f" b="#0b0f10"><g transform="translate(5 17)"><FaApple size={19} color="#fff" /></g><text x="24" y="35" fontFamily="Inter" fontSize="21" fontWeight="500" fill="#fff">tv</text></Tile> },
  { art: <Tile id="news" a="#fcfcfc" b="#f6f6f6"><path d="M9 11H20L46 44H35z" fill="#ee4260" /><path d="M9 24V44H25zM46 30V11H30z" fill="#e2445c" /></Tile> },
  { art: <Tile id="key" a="#4db3f7" b="#2d65ea"><path d="M13 8H41L43 24H11z" fill="#f4f4f4" /><path d="M27 24V44M18 45H36" stroke="#dce6f5" strokeWidth="3" /><circle cx="27" cy="15" r="5" fill="#3aa0a8" /><path d="M27 15V10a5 5 0 0 1 5 5z" fill="#f0b63b" /></Tile> },
  { run: 1, art: <Tile id="num" a="#8aec70" b="#55cf45"><path d="M13 46V35M22 46V26M32 46V8M41 46V18" stroke="#fff" strokeWidth="6" /></Tile> },
  { art: <Tile id="pages" a="#f6b044" b="#ee8c33"><path d="M40 10Q46 10 43 17L16 45L10 46L13 39z" fill="#f4f4f4" /><path d="M14 40L12 46L18 44z" fill="#8d8d8d" /><path d="M20 46H45" stroke="#fbd9a8" strokeWidth="2" /></Tile> },
  { art: <Tile id="as" a="#46adf6" b="#2563dd"><path d="M30 10L15 41M23 12L39 41M9 35H32M38 35H45" stroke="#fff" strokeWidth="4.500" strokeLinecap="round" /></Tile> },
  { run: 1, badge: "1", r: 2, art: <Tile id="set" a="#cfd6dc" b="#8a8d8f"><circle cx="27" cy="27" r="22" fill="#7d7f80" stroke="#2e2f30" strokeWidth="4" strokeDasharray="2 1" /><circle cx="27" cy="27" r="15" fill="none" stroke="#3a3b3c" strokeWidth="5" /><path d="M27 27V12M27 27L14 35M27 27L40 35" stroke="#3a3b3c" strokeWidth="3" /><circle cx="27" cy="27" r="4" fill="#bfc1c2" /></Tile> },
  { run: 1, art: <Tile id="mir" a="#b4b5b6" b="#a6a7a8"><rect x="16" y="4" width="23" height="46" rx="5" fill="#16181c" /><rect x="18" y="6" width="19" height="42" rx="3.500" fill="#15405c" /><path d="M18 6H34Q30 24 18 42z" fill="#f3a58e" /><path d="M37 14V28Q34 36 20 48H18V42Q30 32 37 14z" fill="#48b4c4" /><rect x="24" y="6" width="8" height="2.500" rx="1" fill="#000" /></Tile> },
  { art: <Tile id="fb" a="#c46be8" b="#9a45d2"><rect x="11" y="13" width="32" height="24" rx="5" fill="#fff" /><path d="M18 36V44L27 36z" fill="#fff" /><path d="M27 18V27M27 30V33" stroke="#9a45d2" strokeWidth="4" /></Tile> },
];
const dockB = [
  { art: <Tile id="calc" a="#dadada" b="#c6c6c6"><rect x="12" y="7" width="30" height="40" rx="5" fill="#36383c" /><rect x="16" y="11" width="22" height="9" rx="2" fill="#55585c" />{[0, 1, 2].map((r) => [0, 1, 2].map((c) => <circle key={r * 3 + c} cx={19 + c * 8} cy={26 + r * 7.5} r="2.700" fill={c === 2 ? "#f19a38" : "#d8d8d8"} />))}</Tile> },
  { art: <Tile id="chr" a="#fafafa" b="#ececec"><ChromeMark r={23} /></Tile> },
  { art: <Tile id="prev" a="#f0f0f4" b="#dcdce2"><rect x="3" y="4" width="48" height="46" rx="9" fill="#8fb3ee" /><rect x="3" y="29" width="48" height="8" fill="#2e5a96" /><path d="M3 37H51V50H8z" fill="#c7d3dd" /><path d="M3 40L14 37L22 44L12 50z" fill="#7c6a5a" /><rect x="29" y="26" width="20" height="10" rx="2" fill="#1c1c1e" /><path d="M31 36H47L50 54H28z" fill="#d8e2ea" /></Tile> },
  { art: <Tile id="sn" a="#fdfdfd" b="#f4f4f4"><circle cx="27" cy="27" r="23" fill="#f3b44b" /><circle cx="26" cy="26" r="21" fill="#e25c2e" /><path d="M36 17H22Q18 17 18 22T22 27H32Q36 27 36 32T32 37H18" stroke="#fff" strokeWidth="5.500" fill="none" /></Tile> },
  { art: <Tile id="stk" a="#fbf0a0" b="#e3cd62"><path d="M54 36L40 54H54z" fill="#c8ae3e" /><path d="M8 18C12 2 16 26 22 14C26 20 30 14 44 18M9 27H44M9 36H28" stroke="#d0bb58" strokeWidth="3" fill="none" /></Tile> },
  { art: <Tile id="k" a="#f7f7fd" b="#d9d4f8"><circle cx="15" cy="15" r="6" fill="#140f33" /><path d="M10 24H21L33 10H45L33 27L45 44H33L21 30V44H10z" fill="#140f33" /></Tile> },
  { art: <Tile id="anv" a="#141414" b="#0c0c0c"><path d="M10 17H43V21Q34 22 32 27Q32 30 37 35V38H30Q27 34 24 38H17V35Q22 30 22 27Q12 26 10 17z" fill="#fff" /></Tile> },
  { art: <Tile id="br" a="#fdfdfd" b="#f4f4f4"><g transform="translate(6 4)"><SiBrave size={43} color="#e4572e" /></g></Tile> },
  { art: <Tile id="gpt" a="#fafbfc" b="#dfe5ee"><g transform="translate(7 7)"><SiOpenai size={40} color="#2b3340" /></g></Tile> },
  { art: <svg width="54" height="54" viewBox="0 0 54 54"><path d="M0 20L26 3L54 27L28 44z" fill="#f4f0ec" /><path d="M0 20L28 44V52L1 29z" fill="#e9e2dc" /><path d="M28 44L54 27V34L28 52z" fill="#e4652c" /><path d="M1 26L28 50V54L3 32z" fill="#e4652c" /><ellipse cx="25" cy="17" rx="15" ry="10" fill="#7c2f42" /><ellipse cx="25" cy="17" rx="11" ry="7" fill="#d9c94a" /><ellipse cx="25" cy="17" rx="5" ry="3" fill="#8aa83a" /></svg> },
  { art: <Tile id="chb" a="#fafafa" b="#ececec"><ChromeMark r={23} /><path d="M0 8L14 0H30L0 26z" fill="#2b5fc0" /><text x="3" y="24" transform="rotate(-40 3 24)" fontFamily="Inter" fontSize="8.500" fontWeight="700" fill="#fff">BETA</text></Tile> },
  { art: <Tile id="term" a="#c9d6da" b="#8b9294"><rect x="2" y="2" width="50" height="50" rx="11" fill="#000" /><rect x="5" y="5" width="44" height="44" rx="8" fill="#202124" /><path d="M9 10L15 14L9 18M18 20H26" stroke="#fff" strokeWidth="2.200" fill="none" /></Tile> },
  { art: <svg width="58" height="54" viewBox="0 0 58 54"><path d="M14 2H44Q47 2 47 6V16H14z" fill="#f3bb3c" /><path d="M14 2V16H0z" fill="#dc4f3f" /><path d="M0 16H14V38H0z" fill="#3f7de8" /><path d="M0 38H14V52H4Q0 52 0 48z" fill="#2f62c8" /><path d="M14 38H47V48Q47 52 43 52H14z" fill="#4fa552" /><path d="M33 27L47 16V38z" fill="#2c7d3a" /><path d="M14 16H33V38H14z" fill="#1d211d" /><path d="M47 16L56 9Q58 8 58 11V43Q58 46 56 45L47 38z" fill="#4fa552" /></svg> },
  { art: <Tile id="xc" a="#4ab8f7" b="#2d6df0"><path d="M10 0V54M27 0V54M44 0V54M0 10H54M0 27H54M0 44H54" stroke="#6fb9fa" strokeWidth=".6" /><path d="M12 44L34 14" stroke="#23262b" strokeWidth="6" strokeLinecap="round" /><path d="M26 8Q36 4 44 14L50 22L45 25L38 18L30 16z" fill="#34383e" /></Tile> },
  { art: <Tile id="sim" a="#4ab8f7" b="#2d6df0"><path d="M22 10H44V28H22z" fill="#a9d9fc" /><rect x="7" y="17" width="13" height="27" rx="3" fill="#e9f5fe" /><path d="M22 26H38Q48 26 48 40Q40 36 36 42H22z" fill="#cfe8fd" /></Tile> },
  { art: <Tile id="tm" a="#7c8494" b="#3c4152"><rect x="1.500" y="1.500" width="51" height="51" rx="12" fill="#1c1f3a" /><path d="M14 5H40" stroke="#f3e14a" strokeWidth="3" /><path d="M49 16V38" stroke="#54c46a" strokeWidth="3" /><path d="M5 16V38" stroke="#ea5b5b" strokeWidth="3" /><path d="M8 44Q10 49 16 49H38Q45 49 47 44" stroke="#4a9bf5" strokeWidth="3" fill="none" /><path d="M14 20L26 27L42 18" stroke="#fff" strokeWidth="3" fill="none" /><circle cx="26" cy="27" r="4" fill="#c9ccd8" /></Tile> },
  { art: <Tile id="cl" a="#d97b5c" b="#cf6f50">{Array.from({ length: 12 }, (_, i) => <path key={i} d="M27 27V8" stroke="#fff" strokeWidth="3" strokeLinecap="round" transform={`rotate(${i * 30 + 5} 27 27)`} />)}</Tile> },
  { art: <Tile id="cur" a="#050505" b="#000"><path d="M27 8L44 18V36L27 46L10 36V18z" fill="#8d8d8d" /><path d="M10 18H44L27 46V27z" fill="#e9e9e9" /><path d="M10 18L27 27V46L10 36z" fill="#5c5c5c" /><path d="M27 8L44 18H10z" fill="#444" /></Tile> },
];

const Shield = () => (
  <g transform="translate(40 28)"><rect width="20" height="21" rx="5" fill="#fff" /><g transform="translate(3 3)"><SiBrave size={15} color="#e4572e" /></g></g>
);
const thumbs = [
  <><rect y="7" width="62" height="38" fill="#f2f2f2" /><path d="M0 18H62" stroke="#eba04a" strokeWidth="2" /><path d="M2 24H50M2 29H50M2 34H46M2 40H40" stroke="#9fb7bd" strokeWidth="2.500" /></>,
  <><rect y="7" width="62" height="38" fill="#f6f6f8" /><rect y="12" width="9" height="33" fill="#1d2742" /><path d="M14 18H40M14 26H52M14 33H36" stroke="#b9bdc8" strokeWidth="2" /></>,
  <><rect y="7" width="62" height="38" fill="#fafbfd" /><rect y="10" width="62" height="6" fill="#3f93e8" /><path d="M10 22H28M14 30H32" stroke="#aab6c6" strokeWidth="2" /><rect x="42" y="19" width="11" height="4" fill="#4a90e8" /></>,
  <><rect y="7" width="62" height="38" fill="#5fb2c6" /><rect y="7" width="62" height="3" fill="#e7eaee" /><path d="M0 30Q18 24 34 30T62 28V45H0z" fill="#f2a64a" /><circle cx="8" cy="15" r="4" fill="#3b4757" /><circle cx="23" cy="15" r="4" fill="#e8eef0" /></>,
];

const menus = [["Chrome Beta", 208, true], ["File", 84], ["Edit", 89], ["View", 99], ["History", 128], ["Bookmarks", 176], ["Profiles", 132], ["Tab", 84], ["Window", 138], ["Help", 80]];
const S = { fill: "none", stroke: "#f2f2ee", strokeWidth: 2.5, strokeLinecap: "round" };

const CloudIcon = () => (
  <svg width="44" height="38" viewBox="0 0 44 38">
    <path d="M38 18C38 8 31 2 25 2C20 2 16 5 14 8C6 7 1 13 1.500 20C1.500 28 7 33 13 34H29" {...S} strokeWidth="2.800" />
    <path d="M8 21C8 12 17 11 19 18L24 27L29 34H20C10 33 8 27 8 21z" fill="#f2f2ee" />
    <path d="M13 19L19 29" stroke="#494a39" strokeWidth="3" strokeLinecap="round" />
    <path d="M20 10Q26 4 31 11L26 15Q22 14 20 10z" fill="#f2f2ee" />
    <path d="M25 22L31 17V20H36V25H31V28z" fill="#4aa3df" />
    <path d="M44 32L38 26V30H32V35H38V38z" fill="#4aa3df" />
  </svg>
);
const BroomIcon = () => (
  <svg width="32" height="36" viewBox="0 0 32 36">
    <path d="M30 8L26 12C23 6 16 10 13 17M7 16C8 6 14 1 20 2Q27 2 30 8M30 26L26 24Q22 30 16 30M30 26Q26 34 16 34" {...S} strokeWidth="2" />
    <path d="M20 3L14 18M8 17L18 23M7 21L16 26Q16 32 14 34Q6 35 1 30Q6 28 7 21z" {...S} strokeWidth="2.200" />
  </svg>
);
const FlameIcon = () => (
  <svg width="34" height="38" viewBox="0 0 34 38">
    <path d="M15 37C4 34 0 26 1 17Q2 7 7 1L16 14L26 1Q32 8 32 18L24 18L15 24Q10 30 15 37z" fill="#fff" />
    <path d="M8 21Q7 28 11 34L15 24z" fill="#fff" /><ellipse cx="25" cy="27" rx="8.500" ry="10" fill="#dc453b" />
  </svg>
);
const LlamaIcon = () => (
  <svg width="28" height="40" viewBox="0 0 28 40">
    <path d="M4 0L8 7H15L18 0L20 9Q23 14 20 20L15 26V39H2Q0 32 3 26Q-1 14 3 9z" fill="#f2f2ee" />
    <ellipse cx="12" cy="20" rx="4.500" ry="4.500" fill="none" stroke="#494a39" strokeWidth="1.800" /><circle cx="12" cy="20" r="1.200" fill="#494a39" />
    <circle cx="5.500" cy="16.500" r="1.300" fill="#494a39" /><circle cx="18" cy="16.500" r="1.300" fill="#494a39" />
    <path d="M21.500 25V36M17.500 32L21.500 38L25.500 32z" fill="#f2f2ee" stroke="#f2f2ee" strokeWidth="3" />
  </svg>
);
const ChipIcon = () => (
  <svg width="32" height="38" viewBox="0 0 32 38">
    <path d="M11 9H24V24H11z" fill="#fff" />
    <path d="M14 2L22 11M7 10L11 15M2 17L13 30M16 25L20 35M13 29L16 36M26 12L31 18M25 20L27 24M4 24L12 33" stroke="#f2f2ee" strokeWidth="2.600" fill="none" strokeDasharray="5 1.500" />
  </svg>
);
const AirdropIcon = () => (
  <svg width="32" height="38" viewBox="0 0 32 38">
    <path d="M8 34C-2 26 0 2 16 2S34 26 24 34M11 31C4 23 6 8 16 8S28 23 21 31M13 26C9 20 11 13.500 16 13.500S23 20 19 26" {...S} strokeWidth="2.200" />
    <circle cx="16" cy="19" r="2.200" fill="#f2f2ee" />
  </svg>
);

const StatusIcons = () => (
  <Status>
    <StatusCell $w={61}><SiOpenai size={32} /></StatusCell>
    <StatusCell $w={84} $pl={4}><CloudIcon /></StatusCell>
    <StatusCell $w={74}><BroomIcon /></StatusCell>
    <StatusCell $w={76} $pl={2}><FlameIcon /></StatusCell>
    <StatusCell $w={68} $pl={5}><LlamaIcon /></StatusCell>
    <StatusCell $w={74}><ChipIcon /></StatusCell>
    <StatusCell $w={70}><AirdropIcon /></StatusCell>
    <StatusCell $w={66}><svg width="32" height="34" viewBox="0 0 32 34"><rect width="32" height="34" rx="4" fill="#fafafa" /><path d="M3 20H10L18 3H29L20 17L29 31H19L12 22V31H3z" fill="#160f3a" /><circle cx="10" cy="11" r="10" fill="#df4438" /><path d="M6.500 7.500L13.500 14.500M13.500 7.500L6.500 14.500" stroke="#fff" strokeWidth="2.800" /></svg></StatusCell>
    <StatusCell $w={64}><svg width="20" height="30" viewBox="0 0 20 30"><path d="M2 8L18 21L10 28V2L18 9L2 22" {...S} strokeWidth="2.300" strokeLinejoin="round" /></svg></StatusCell>
    <StatusCell $w={74}><svg width="36" height="28" viewBox="0 0 36 28"><path d="M2.500 11Q18 -4 33.500 11M8.500 17Q18 8 27.500 17" {...S} strokeWidth="4.500" strokeLinecap="butt" /><path d="M18 27L12 21Q18 16 24 21z" fill="#f2f2ee" /></svg></StatusCell>
    <StatusCell $w={85} $start $pl={19} $fs={22.5} $ls={-0.4}>100%</StatusCell>
    <StatusCell $w={54}><svg width="52" height="26" viewBox="0 0 52 26"><rect x="1.200" y="1.200" width="44" height="23.500" rx="7" fill="none" stroke="#a5a69a" strokeWidth="2.200" /><rect x="4" y="4" width="38.500" height="18" rx="4.500" fill="#f4f4f0" /><path d="M48 9Q51 13 48 17z" fill="#a5a69a" /><path d="M26 1L15 14H22L20 25L32 11H25z" fill="#f4f4f0" stroke="#494a39" strokeWidth="2" /></svg></StatusCell>
    <StatusCell $w={93}><svg width="28" height="28" viewBox="0 0 28 28"><circle cx="11.500" cy="11.500" r="9.500" {...S} strokeWidth="2.800" /><path d="M18.500 18.500L26 26" {...S} strokeWidth="3.200" /></svg></StatusCell>
    <StatusCell $w={43}><svg width="28" height="28" viewBox="0 0 28 28"><rect x="1.300" y="1.300" width="25.400" height="10.500" rx="5.200" {...S} /><circle cx="7" cy="6.500" r="3.500" fill="#f2f2ee" /><rect y="15" width="28" height="13" rx="6.500" fill="#f2f2ee" /><circle cx="21" cy="21.500" r="3.800" fill="#494a39" /></svg></StatusCell>
    <StatusCell $w={86}><svg width="30" height="30" viewBox="0 0 30 30"><defs><linearGradient id="siri" x1=".3" y1="0" x2=".6" y2="1"><stop offset="0" stopColor="#f39a3c" /><stop offset=".4" stopColor="#e7677f" /><stop offset=".7" stopColor="#a97be8" /><stop offset="1" stopColor="#4fa8f0" /></linearGradient></defs><circle cx="15" cy="15" r="15" fill="url(#siri)" /><circle cx="15" cy="15" r="10.500" stroke="#fff" strokeWidth="1.400" fill="none" opacity=".8" /><path d="M6 12Q10 9 15 15T24 18Q26 12 20 12Q16 13 13 18Q8 23 6 16" stroke="#fff" strokeWidth="1.600" fill="none" opacity=".85" /></svg></StatusCell>
    <StatusCell $w={147} $start $pl={3} $ls={0.25}>Wed Oct 1</StatusCell>
    <StatusCell $w={146} $start $pl={1} $ls={-0.2}>10:36 PM</StatusCell>
  </Status>
);

const tabs = [
  { label: "NEW VERSION - TSP GROUP", icon: <SheetIcon />, ls: -0.1 },
  { label: "Simple Browser — sandwichproject", icon: <FaGithub size={33} color="#1b191c" />, ls: -0.2 },
  { label: "APIs & Services – Google Maps", icon: <MapsLogo w={22} h={32} />, ls: -0.25 },
  { label: "Sandwich Project - Host Locations", icon: <MdPublic size={34} color="#9fa3ae" />, ls: -0.2, active: true },
];

export default function App() {
  return (
    <>
      <Global />
      <Desktop>
        <Wallpaper />
        <CalcStrip>
          {["(", ")", "mc", "m+", "m-", "mr", "AC", "+/-", "%", "÷"].map((k, i) => (
            <CalcKey key={k} $bg={i === 9 ? "#e08a2c" : i > 5 ? "#5b5b5b" : "#3b3b3b"}>{k}</CalcKey>
          ))}
        </CalcStrip>
        <Sticky $x={3181} $y={2216} $w={84} $h={18} $bg="#e5dd92">{"git clo"}</Sticky>
        <Sticky $x={3265} $y={2136} $w={191} $h={98} $bg="linear-gradient(#06090a 0%, #1d2b2e 25%, #7fb9c4 60%, #a5dbe6 100%)">{"me\ne fo\nothers often"}</Sticky>

        <MenuBar>
          <AppleCell><FaApple size={34} /></AppleCell>
          {menus.map(([t, w, bold]) => <MenuItem key={t} $w={w} $bold={bold}>{t}</MenuItem>)}
          <StatusIcons />
        </MenuBar>

        <BackWindow>
          <BackTabs><GreyDot /></BackTabs>
          <BackTools><Arrow /><Grid4 /></BackTools>
          <BackBody>
            <Rail>
              <RailRow $h={98} $pl={32} $line><MdMenu size={46} /></RailRow>
              <RailRow $h={56} $pl={48} $line><MapsLogo w={33} h={47} /></RailRow>
              <RailRow $h={73} $mt={15}><MdApi size={36} /></RailRow>
              <RailRow $h={73}><ApiText>API</ApiText></RailRow>
              <RailRow $h={73}><MdBarChart size={40} /></RailRow>
              <RailRow $h={70} $pl={49}><QuotaIcon /></RailRow>
              <RailRow $h={73} $active $pl={49}><KeyIcon /></RailRow>
              <RailRow $h={73}><MdPerson size={40} /></RailRow>
              <RailRow $h={72}><MdOutlineWidgets size={38} /></RailRow>
              <RailRow $h={72}><MdMap size={38} /></RailRow>
              <RailRow $h={72}><MdOutlinePalette size={38} /></RailRow>
              <RailRow $h={72} $pl={49}><DatasetIcon /></RailRow>
              <RailRow $h={2} $mt={753} $line />
              <RailRow $h={74} $pl={49} $line><NotesIcon /></RailRow>
              <RailRow $h={96}><svg width="32" height="24" viewBox="0 0 32 24"><path d="M16 3L8 12L16 21M24 0V24" stroke="currentColor" strokeWidth="3.500" fill="none" /></svg></RailRow>
            </Rail>
            <BackPane />
          </BackBody>
        </BackWindow>

        <FrontWindow>
          <WindowClip>
            <TabStrip>
              <Lights><Light $c="#ec6a5e" /><Light $c="#f4bf4f" /><Light $c="#61c554" /></Lights>
              {tabs.map((t, i) => (
                <TabItem key={t.label} $active={t.active}>
                  <TabIcon>{t.icon}</TabIcon>
                  <TabLabel $ls={t.ls}>{t.label}</TabLabel>
                  <CloseX><XMark /></CloseX>
                  {i < 2 && <TabSep />}
                </TabItem>
              ))}
              <NewTab><svg width="20" height="20" viewBox="0 0 20 20"><path d="M10 0V20M0 10H20" stroke="#b9c6ae" strokeWidth="3" /></svg></NewTab>
            </TabStrip>
            <Toolbar>
              <NavCell><Arrow /></NavCell>
              <NavCell><Arrow flip /></NavCell>
              <NavCell>
                <svg width="28" height="28" viewBox="0 0 28 28"><path d="M24 16A10.500 10.500 0 1 1 21 6.500L24 9.500" stroke="#c3cdb9" strokeWidth="3" fill="none" /><path d="M25 1V11H15" stroke="#c3cdb9" strokeWidth="3" fill="none" /></svg>
              </NavCell>
              <UrlPill>
                <SiteChip><svg width="26" height="26" viewBox="0 0 26 26"><g stroke="#dfe6d7" strokeWidth="2.800" fill="none"><circle cx="6" cy="6" r="3.800" /><path d="M13 6H25M1 20H13" /><circle cx="20" cy="20" r="3.800" /></g></svg></SiteChip>
                <Url><span>nicunursekatie.github.io</span>/sandwichprojectcollectionsites/</Url>
              </UrlPill>
            </Toolbar>
            <Bookmarks><Grid4 /></Bookmarks>
            <Page>
              <HeaderCard>
                <SearchBottom />
                <Filters>
                  <FilterButton $on $w={273} $pl={50} $gap={11}><ClipboardEmoji />All Hosts</FilterButton>
                  <FilterButton $w={257} $pl={48} $gap={6}><HousesEmoji />By Area</FilterButton>
                </Filters>
              </HeaderCard>
              <List>{hosts.map((h) => <HostCard key={h.id} host={h} />)}</List>
            </Page>
          </WindowClip>
        </FrontWindow>

        <Notice>
          <NoticeIcon><FcGoogle size={50} /></NoticeIcon>
          <NoticeText><b>Google Password Required</b>Enter your password for “katielong2316” in<br />Internet Accounts.</NoticeText>
        </Notice>

        <Dock>
          {dockA.map((d, i) => (
            <DockItem key={i}>{d.art}{d.badge && <Badge $r={d.r} $fs={d.fs}>{d.badge}</Badge>}{d.run && <Running />}</DockItem>
          ))}
          <DockSep $ml={15} $mr={14} />
          {dockB.map((d, i) => <DockItem key={i}>{d.art}<Running /></DockItem>)}
          <DockSep $ml={15} $mr={13} />
          <DockItem $w={70}>
            <svg width="56" height="56" viewBox="0 0 56 56"><path d="M9 0H34L56 30V56H0V15H9z" fill="#e9e9e9" /><path d="M34 0L40 28L56 30z" fill="#fff" /><path d="M0 18H40" stroke="#b28fc0" strokeWidth="4" /><path d="M0 24H40M0 48H54" stroke="#d98fb2" strokeWidth="4" /><path d="M0 30H54" stroke="#e8b04c" strokeWidth="5" /><path d="M0 38H54" stroke="#e8e45a" strokeWidth="6" /><path d="M0 44H54" stroke="#7a9fd8" strokeWidth="5" /><text x="17" y="53" fontFamily="Inter" fontSize="9" fontWeight="600" fill="#888">XLSX</text></svg>
          </DockItem>
          {thumbs.map((t, i) => <DockItem key={i} $w={69.4}><svg width="62" height="54" viewBox="0 0 62 54">{t}<Shield /></svg></DockItem>)}
          <DockItem $w={70}>
            <svg width="50" height="58" viewBox="0 0 50 58"><path d="M2 6L9 54Q25 60 41 54L48 6z" fill="#7d8485" opacity=".75" /><path d="M12 8L16 52M38 8L34 52" stroke="#a2a8a9" strokeWidth="3" opacity=".5" /><ellipse cx="25" cy="6" rx="23" ry="5" fill="#43494a" stroke="#8f9697" strokeWidth="1.500" /></svg>
          </DockItem>
        </Dock>
      </Desktop>
    </>
  );
}
